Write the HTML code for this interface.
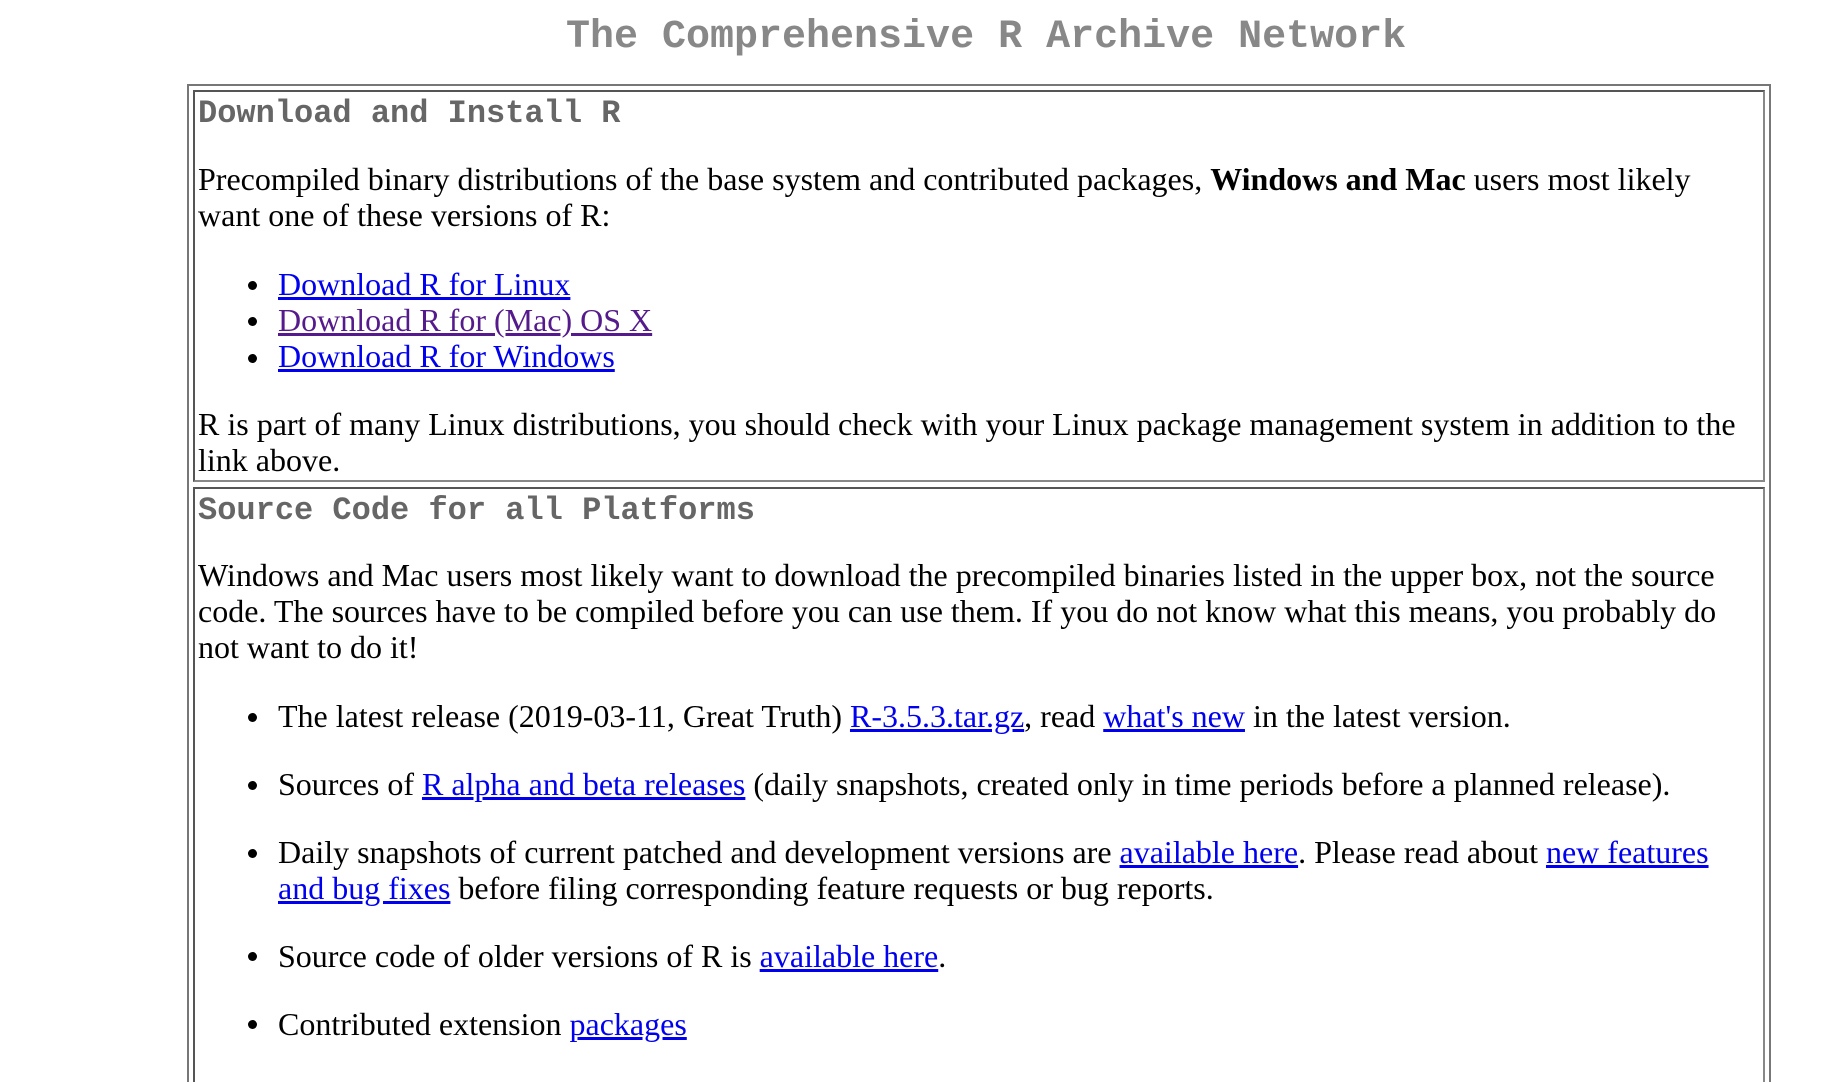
<!DOCTYPE html>
<html><head><meta charset="utf-8"><style>
html,body{margin:0;padding:0;background:#fff;width:1840px;height:1082px;overflow:hidden;position:relative}
.t{position:absolute;white-space:nowrap;font-family:"Liberation Serif",serif;font-size:32px;line-height:36px;color:#000}
.h{position:absolute;white-space:nowrap;font-family:"Liberation Mono",monospace;font-weight:bold;color:#666}
a{color:#0000ee;text-decoration:underline}
a.v{color:#551a8b}
.box{position:absolute;border:2px solid #777;box-sizing:border-box}
.cell{position:absolute;border:2px solid #555;border-right-color:#888;border-bottom-color:#888;box-sizing:border-box}
.b{position:absolute;width:9px;height:9px;border-radius:50%;background:#000}
</style></head><body>
<div class="h" style="left:566px;top:14px;font-size:40px;line-height:48px;color:#888">The Comprehensive R Archive Network</div>
<div class="box" style="left:187px;top:84px;width:1584px;height:1020px"></div>
<div class="cell" style="left:193px;top:90px;width:1572px;height:392px"></div>
<div class="cell" style="left:193px;top:487px;width:1572px;height:620px"></div>

<div class="h" style="left:198px;top:95px;font-size:32px;line-height:38px">Download and Install R</div>
<div class="t" style="left:198px;top:161px">Precompiled binary distributions of the base system and contributed packages, <b>Windows and Mac</b> users most likely</div>
<div class="t" style="left:198px;top:197px">want one of these versions of R:</div>
<div class="b" style="left:248px;top:281px"></div><div class="t" style="left:278px;top:266px"><a href="#">Download R for Linux</a></div>
<div class="b" style="left:248px;top:317px"></div><div class="t" style="left:278px;top:302px"><a class="v" href="#">Download R for (Mac) OS X</a></div>
<div class="b" style="left:248px;top:354px"></div><div class="t" style="left:278px;top:338px"><a href="#">Download R for Windows</a></div>
<div class="t" style="left:198px;top:406px">R is part of many Linux distributions, you should check with your Linux package management system in addition to the</div>
<div class="t" style="left:198px;top:442px">link above.</div>

<div class="h" style="left:198px;top:492px;font-size:32px;line-height:38px">Source Code for all Platforms</div>
<div class="t" style="left:198px;top:557px">Windows and Mac users most likely want to download the precompiled binaries listed in the upper box, not the source</div>
<div class="t" style="left:198px;top:593px">code. The sources have to be compiled before you can use them. If you do not know what this means, you probably do</div>
<div class="t" style="left:198px;top:629px">not want to do it!</div>
<div class="b" style="left:248px;top:713px"></div><div class="t" style="left:278px;top:698px">The latest release (2019-03-11, Great Truth) <a href="#">R-3.5.3.tar.gz</a>, read <a href="#">what's new</a> in the latest version.</div>
<div class="b" style="left:248px;top:781px"></div><div class="t" style="left:278px;top:766px">Sources of <a href="#">R alpha and beta releases</a> (daily snapshots, created only in time periods before a planned release).</div>
<div class="b" style="left:248px;top:849px"></div><div class="t" style="left:278px;top:834px">Daily snapshots of current patched and development versions are <a href="#">available here</a>. Please read about <a href="#">new features</a></div>
<div class="t" style="left:278px;top:870px"><a href="#">and bug fixes</a> before filing corresponding feature requests or bug reports.</div>
<div class="b" style="left:248px;top:952px"></div><div class="t" style="left:278px;top:938px">Source code of older versions of R is <a href="#">available here</a>.</div>
<div class="b" style="left:248px;top:1020px"></div><div class="t" style="left:278px;top:1006px">Contributed extension <a href="#">packages</a></div>
</body></html>
